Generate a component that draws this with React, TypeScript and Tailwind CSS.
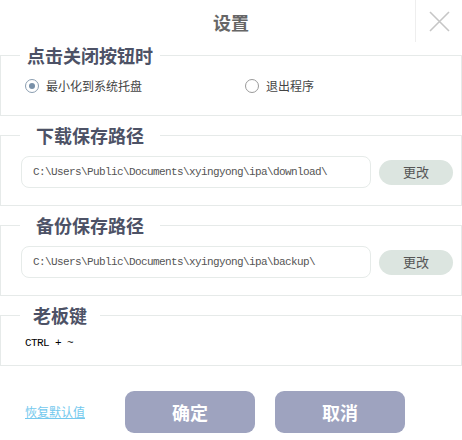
import React from "react";

const cjk = "font-['Microsoft_YaHei','Noto_Sans_CJK_SC','Noto_Sans',sans-serif]";
const mono = "font-['Liberation_Mono','DejaVu_Sans_Mono',monospace]";

function Radio({ checked, label }: { checked?: boolean; label: string }) {
  return (
    <label className="flex items-center gap-[7px] h-[20px]">
      <span
        className={`w-[14px] h-[14px] rounded-full border flex items-center justify-center ${
          checked ? "border-[#8a9db0]" : "border-[#9a9a9a]"
        }`}
      >
        {checked && <span className="w-[6px] h-[6px] rounded-full bg-[#7890a8]" />}
      </span>
      <span className="text-[12px] leading-[20px] text-[#444]">{label}</span>
    </label>
  );
}

function Legend({ text, w }: { text: string; w: string }) {
  return (
    <legend className="ml-[19px] p-0 text-left">
      <span
        className={`block ${w} text-center text-[18px] leading-[18px] font-bold text-[#4d5266]`}
      >
        {text}
      </span>
    </legend>
  );
}

function PathSection({ title, path }: { title: string; path: string }) {
  return (
    <fieldset className="mt-[10px] border border-[#e6eae9] pt-[12px] pb-[17px]">
      <Legend text={title} w="w-[140px]" />
      <div className="flex items-center pl-[20px]">
        <div className="w-[350px] h-[32px] rounded-[8px] border border-[#e6ebe9] flex items-center pl-[11px]">
          <span className={`${mono} text-[11px] tracking-[-0.6px] text-[#555]`}>{path}</span>
        </div>
        <button className="ml-[8px] w-[74px] h-[25px] rounded-full bg-[#dce5e0] text-[13px] text-[#555]">
          更改
        </button>
      </div>
    </fieldset>
  );
}

export default function App() {
  return (
    <div className={`w-[462px] h-[440px] bg-white ${cjk}`}>
      <div className="grid grid-cols-[47px_1fr_47px] h-[46px]">
        <div />
        <div className="flex justify-center pt-[11px]">
          <span className="text-[18px] leading-[22px] font-bold text-[#666]">设置</span>
        </div>
        <div className="h-[42px] border-l border-[#eeeeee] flex items-center justify-center">
          <svg width="21" height="21" viewBox="0 0 21 21">
            <path d="M1 1 L20 20 M20 1 L1 20" stroke="#c6c6c6" strokeWidth="1.6" fill="none" />
          </svg>
        </div>
      </div>

      <fieldset className="border border-[#e6eae9] pt-[12px] pb-[19px]">
        <Legend text="点击关闭按钮时" w="w-[140px]" />
        <div className="flex pl-[24px]">
          <div className="w-[220px]">
            <Radio checked label="最小化到系统托盘" />
          </div>
          <Radio label="退出程序" />
        </div>
      </fieldset>

      <PathSection title="下载保存路径" path="C:\Users\Public\Documents\xyingyong\ipa\download\" />
      <PathSection title="备份保存路径" path="C:\Users\Public\Documents\xyingyong\ipa\backup\" />

      <fieldset className="mt-[10px] border border-[#e6eae9] pt-[12px] pb-[15px]">
        <Legend text="老板键" w="w-[80px]" />
        <div className={`pl-[24px] ${mono} text-[11px] leading-[14px] tracking-[-0.6px] text-black`}>
          CTRL + ~
        </div>
      </fieldset>

      <div className="flex items-center mt-[25px] pl-[25px]">
        <a className="w-[60px] text-[12px] text-[#74c9ee] underline cursor-pointer">恢复默认值</a>
        <button className="ml-[40px] w-[130px] h-[42px] rounded-[9px] bg-[#9ea3bf] text-white text-[18px] font-bold">
          确定
        </button>
        <button className="ml-[20px] w-[130px] h-[42px] rounded-[9px] bg-[#9ea3bf] text-white text-[18px] font-bold">
          取消
        </button>
      </div>
    </div>
  );
}
